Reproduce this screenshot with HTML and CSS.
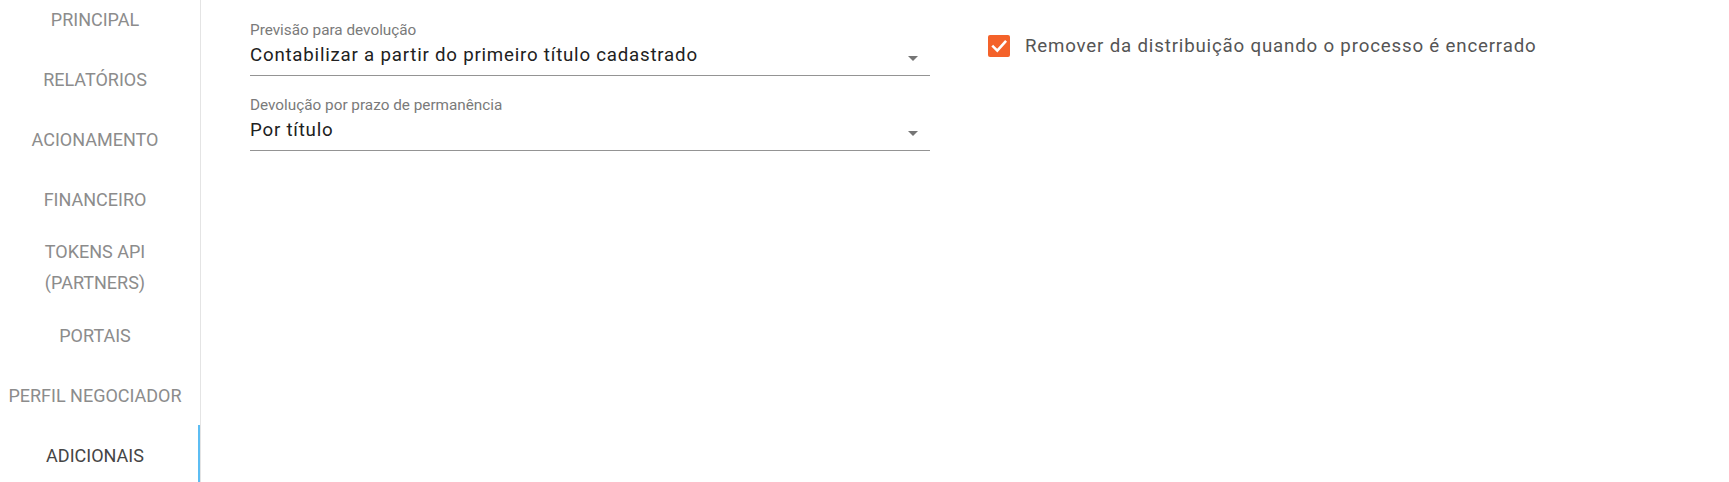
FILE: index.html
```html
<!DOCTYPE html>
<html lang="pt-BR">
<head>
<meta charset="utf-8">
<title>Adicionais</title>
<link rel="stylesheet" href="styles.css">
</head>
<body>
<div class="layout">
  <nav class="sidebar">
    <div class="tabs">
      <div class="tab">Principal</div>
      <div class="tab">Relatórios</div>
      <div class="tab">Acionamento</div>
      <div class="tab">Financeiro</div>
      <div class="tab tab-tall">Tokens API<br>(Partners)</div>
      <div class="tab">Portais</div>
      <div class="tab">Perfil Negociador</div>
      <div class="tab tab-active">Adicionais</div>
    </div>
  </nav>
  <main class="content">
    <div class="fields">
      <div class="field">
        <div class="field-label">Previsão para devolução</div>
        <div class="field-input">
          <span class="field-value">Contabilizar a partir do primeiro título cadastrado</span>
          <svg class="caret" width="10" height="5" viewBox="0 0 10 5"><path d="M0 0 L10 0 L5 5 Z" fill="#757575"/></svg>
        </div>
      </div>
      <div class="field">
        <div class="field-label">Devolução por prazo de permanência</div>
        <div class="field-input">
          <span class="field-value">Por título</span>
          <svg class="caret" width="10" height="5" viewBox="0 0 10 5"><path d="M0 0 L10 0 L5 5 Z" fill="#757575"/></svg>
        </div>
      </div>
    </div>
    <label class="check-row">
      <span class="checkbox">
        <svg width="22" height="22" viewBox="0 0 22 22"><path d="M5.2 11.6 L9.3 15.6 L17.2 6.9" fill="none" stroke="#fff" stroke-width="2.6" stroke-linecap="square"/></svg>
      </span>
      <span class="check-label">Remover da distribuição quando o processo é encerrado</span>
    </label>
  </main>
</div>
</body>
</html>
```
FILE: styles.css
```css
html, body {
  margin: 0;
  padding: 0;
  background: #ffffff;
  font-family: Roboto, "Noto Sans", Arial, sans-serif;
}

.layout {
  display: flex;
  height: 482px;
  overflow: hidden;
}

.sidebar {
  width: 200px;
  flex: none;
  border-right: 1px solid #e4e4e4;
  overflow: hidden;
}

.tabs {
  display: flex;
  flex-direction: column;
  margin-top: -11px;
}

.tab {
  height: 60px;
  display: flex;
  align-items: center;
  justify-content: center;
  text-align: center;
  padding-right: 10px;
  font-size: 18px;
  text-transform: uppercase;
  color: #8c8c8c;
}

.tab-tall {
  height: 76px;
  line-height: 31px;
}

.tab-active {
  color: #454545;
  box-shadow: inset -2px 0 0 #5cbdf3;
}

.content {
  flex: 1;
  display: flex;
  align-items: flex-start;
  padding: 20px 0 0 49px;
  gap: 58px;
}

.fields {
  width: 680px;
  display: flex;
  flex-direction: column;
  gap: 19px;
}

.field {
  border-bottom: 1px solid #949494;
  padding-bottom: 6px;
}

.field-label {
  font-size: 15.3px;
  line-height: 21px;
  color: #7a7a7a;
}

.field-input {
  display: flex;
  align-items: center;
  height: 28px;
}

.field-value {
  flex: 1;
  font-size: 18.7px;
  letter-spacing: 0.78px;
  line-height: 28px;
  color: #212121;
}

.caret {
  margin: 6px 12px 0 0;
}

.check-row {
  display: flex;
  align-items: center;
  gap: 15px;
  margin-top: 14px;
}

.checkbox {
  width: 22px;
  height: 22px;
  border-radius: 2px;
  background: #f4622a;
  display: flex;
}

.check-label {
  font-size: 18.7px;
  letter-spacing: 0.82px;
  line-height: 24px;
  color: #555555;
}
```
